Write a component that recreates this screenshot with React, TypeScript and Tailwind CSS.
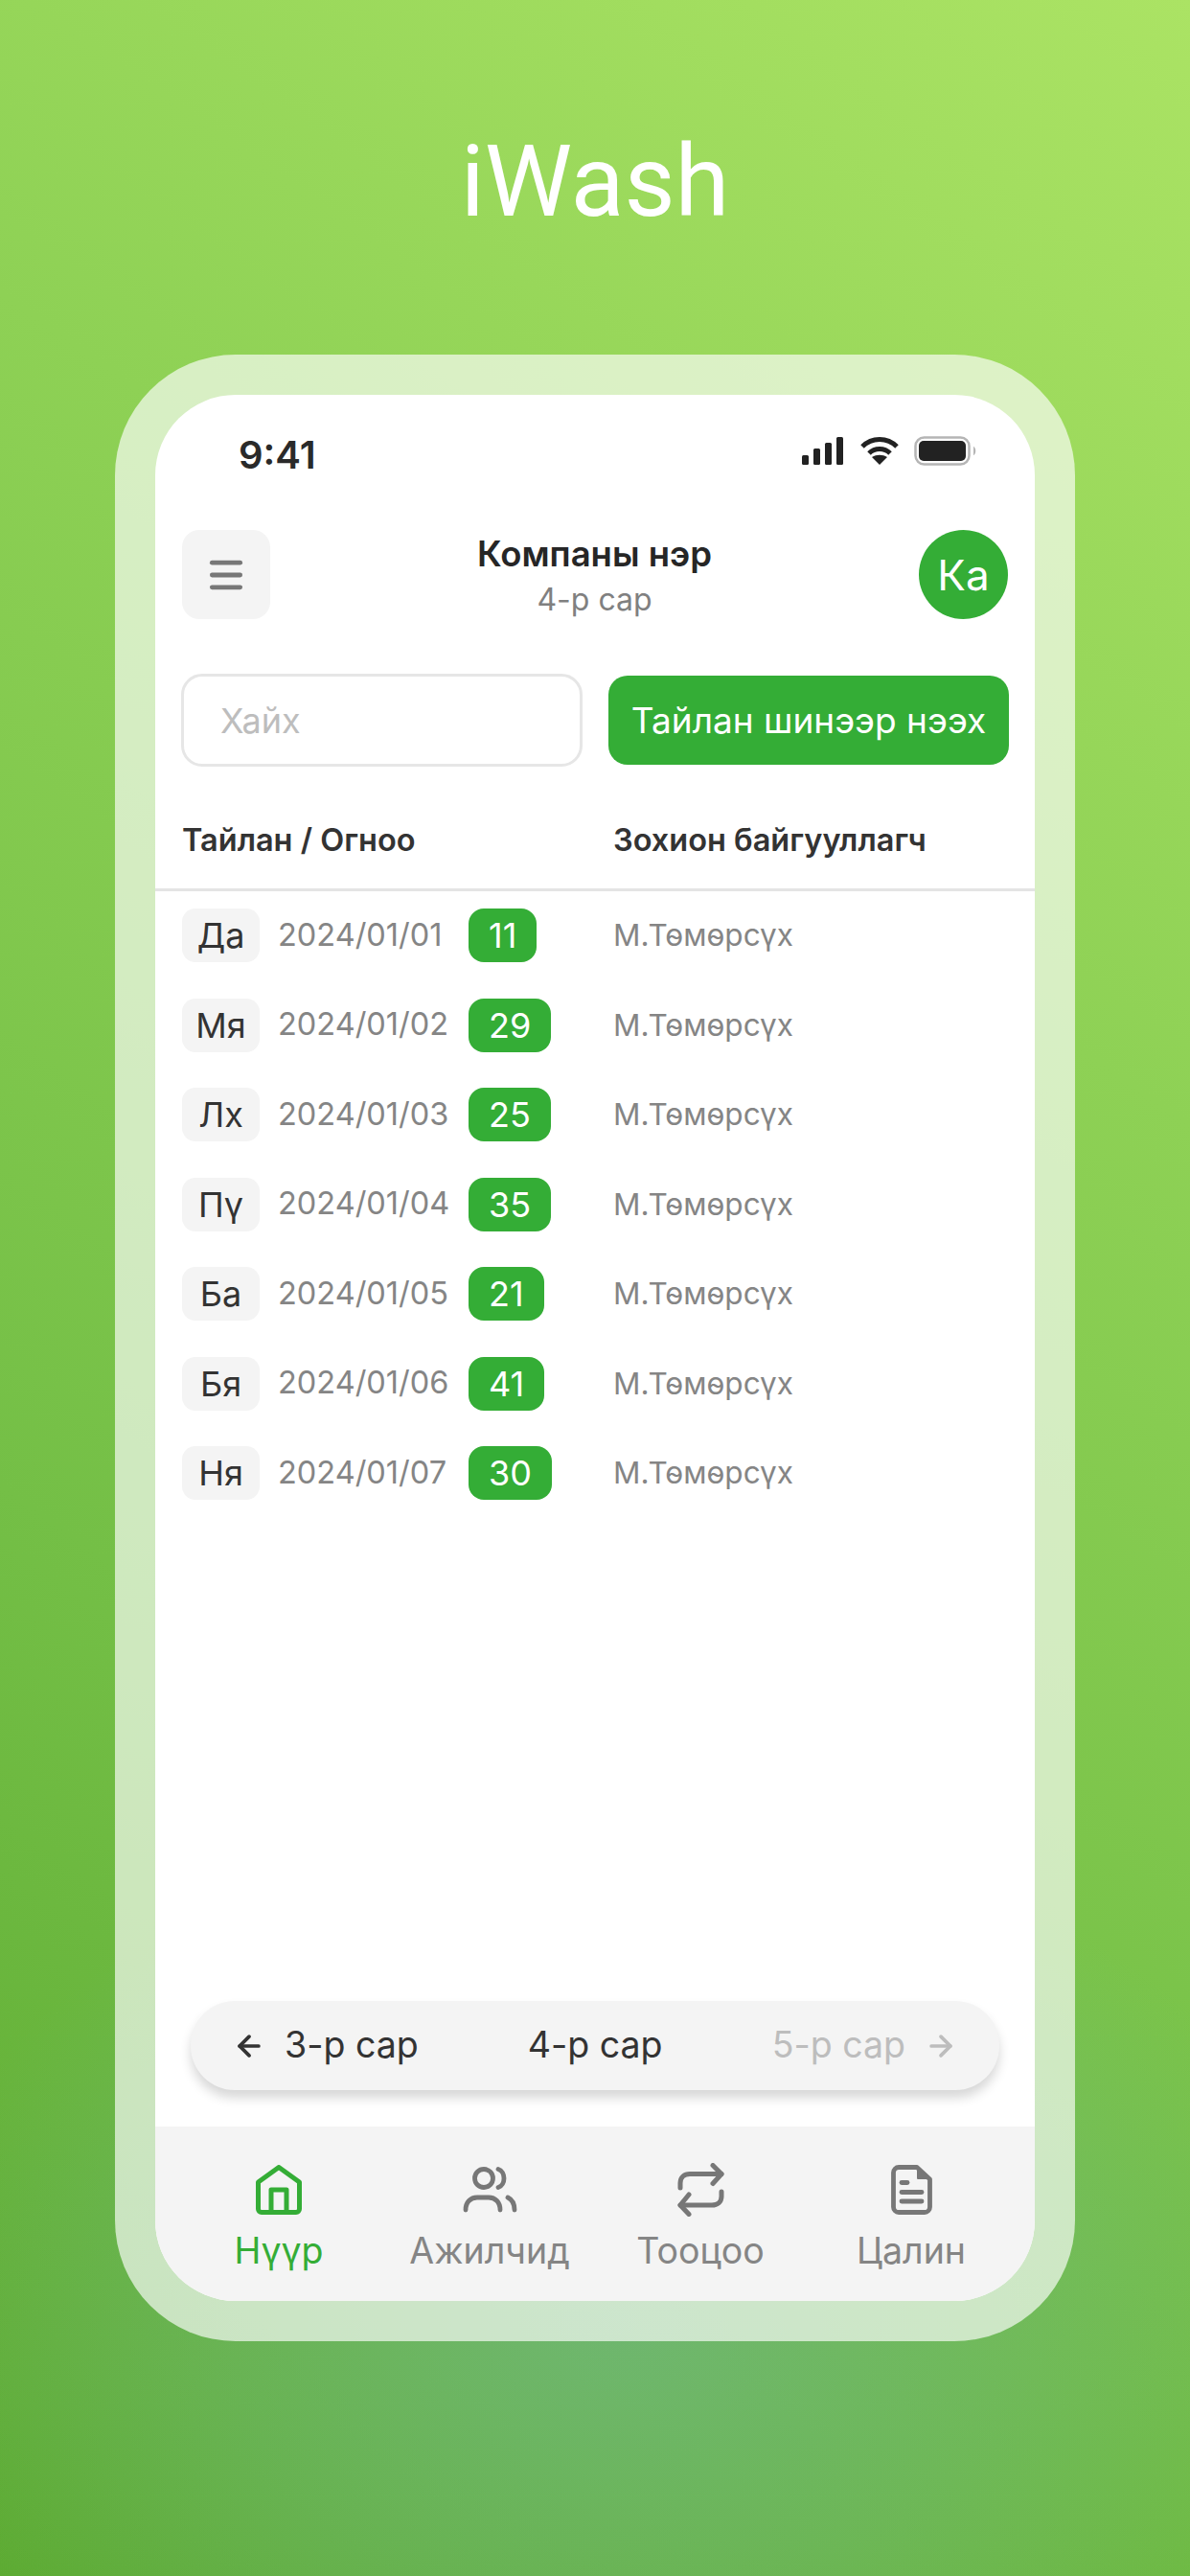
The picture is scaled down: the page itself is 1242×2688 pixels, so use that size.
import { ArrowLeft, ArrowRight, Menu } from "lucide-react";

const rows = [
  { day: "Да", date: "2024/01/01", count: 11 },
  { day: "Мя", date: "2024/01/02", count: 29 },
  { day: "Лх", date: "2024/01/03", count: 25 },
  { day: "Пү", date: "2024/01/04", count: 35 },
  { day: "Ба", date: "2024/01/05", count: 21 },
  { day: "Бя", date: "2024/01/06", count: 41 },
  { day: "Ня", date: "2024/01/07", count: 30 },
];

function HomeIcon() {
  return (
    <svg width="48" height="52" viewBox="0 0 48 52" fill="none" stroke="#34ad36" strokeWidth="5" strokeLinejoin="round">
      <path d="M24 2.5 L45.5 18 V46 a3.5 3.5 0 0 1 -3.5 3.5 H6 a3.5 3.5 0 0 1 -3.5 -3.5 V18 Z" />
      <path d="M16 49.5 V26 H32 V49.5" />
    </svg>
  );
}

function UsersIcon() {
  return (
    <svg width="57" height="48" viewBox="0 0 57 48" fill="none" stroke="#777" strokeWidth="4.8" strokeLinecap="round">
      <circle cx="22" cy="12" r="9.5" />
      <path d="M37 2.5 C45 5 45 19 37 21.5" />
      <path d="M3 45 C3 37 8 32 15 32 H27 C34 32 39 37 39 45" />
      <path d="M47 32 C51 34 54 38 54 45" />
    </svg>
  );
}

function RepeatIcon() {
  return (
    <svg width="49" height="56" viewBox="0 0 49 56" fill="none" stroke="#777" strokeWidth="5" strokeLinecap="round" strokeLinejoin="round">
      <path d="M37 2.5 L46 11.5 L37 21.5" />
      <path d="M46 11.5 H13 C7 11.5 3 15 3 21 V26" />
      <path d="M12 33 L3 44 L12 53.5" />
      <path d="M3 44 H36 C42 44 46 40.5 46 35 V30" />
    </svg>
  );
}

function ReportIcon() {
  return (
    <svg width="43" height="52" viewBox="0 0 43 52" fill="none" stroke="#777" strokeWidth="4.8" strokeLinecap="round" strokeLinejoin="round">
      <path d="M27 2.5 H8 a5.5 5.5 0 0 0 -5.5 5.5 V44 a5.5 5.5 0 0 0 5.5 5.5 H35 a5.5 5.5 0 0 0 5.5 -5.5 V15 Z" />
      <path d="M28 4 V14 H39" fill="#777" strokeWidth="2" />
      <path d="M11 18.5 H17" />
      <path d="M11 28.5 H32" />
      <path d="M11 38 H32" />
    </svg>
  );
}

function StatusIcons() {
  return (
    <div className="flex items-center">
      <svg width="43" height="29" viewBox="0 0 43 29" fill="#222">
        <rect x="0" y="19" width="7" height="10" rx="1.5" />
        <rect x="12" y="12" width="7" height="17" rx="1.5" />
        <rect x="24" y="6" width="7" height="23" rx="1.5" />
        <rect x="36" y="0" width="7" height="29" rx="1.5" />
      </svg>
      <svg className="ml-[18px]" width="40" height="29" viewBox="0 0 40 29" fill="none" stroke="#222" strokeWidth="5">
        <path d="M2 10 C12 0 28 0 38 10" />
        <path d="M9 17 C15 11 25 11 31 17" />
        <path d="M20 29 L12 21 C17 18 23 18 28 21 Z" fill="#222" stroke="none" />
      </svg>
      <svg className="ml-[16px]" width="66" height="31" viewBox="0 0 66 31" fill="none">
        <rect x="1.5" y="1.5" width="56" height="28" rx="9" stroke="#b5b5b5" strokeWidth="2.5" />
        <rect x="5" y="5" width="49" height="21" rx="5" fill="#222" />
        <path d="M62 11 C65 12 65 19 62 20 Z" fill="#b5b5b5" />
      </svg>
    </div>
  );
}

export default function App() {
  return (
    <div className="flex h-[2688px] w-[1242px] flex-col items-center bg-[radial-gradient(ellipse_760px_520px_at_52%_90%,rgba(112,182,132,0.7)_0%,rgba(112,182,132,0.35)_55%,rgba(112,182,132,0)_100%),linear-gradient(215deg,#abe364_0%,#8ed155_33%,#74bf46_68%,#5dab32_100%)] font-['Inter',sans-serif]">
      <h1 className="mt-[130px] h-[120px] font-['Roboto',sans-serif] text-[103px] leading-[120px] font-normal text-white">iWash</h1>

      <div className="mt-[120px] h-[2073px] w-[1002px] rounded-[126px] bg-white/65 p-[42px]">
        <div className="flex h-full flex-col overflow-hidden rounded-[84px] bg-white">
          <div className="flex h-[141px] shrink-0 items-start justify-between pt-[40px] pr-[60px] pl-[87px]">
            <span className="text-[40px] leading-[46px] font-semibold text-[#2a2a2a]">9:41</span>
            <div className="pt-[3px]"><StatusIcons /></div>
          </div>

          <header className="flex h-[93px] shrink-0 items-center justify-between px-[28px]">
            <button className="grid h-[93px] w-[92px] place-items-center rounded-[18px] bg-[#f4f4f4]">
              <Menu size={44} strokeWidth={2.6} className="text-[#777]" />
            </button>
            <div className="flex flex-col items-center">
              <span className="text-[36.5px] leading-[52px] font-semibold text-[#262626]">Компаны нэр</span>
              <span className="text-[32px] leading-[44px] text-[#808080]">4-р сар</span>
            </div>
            <div className="grid h-[93px] w-[93px] place-items-center rounded-full bg-[#34ad36] text-[44px] text-white">Ка</div>
          </header>

          <div className="mt-[57px] flex h-[97px] shrink-0 items-center justify-between px-[27px]">
            <div className="flex h-[97px] w-[419px] items-center rounded-[22px] border-[3px] border-[#e6e6e6] bg-white pl-[38px] text-[36px] text-[#bdbdbd]">Хайх</div>
            <button className="h-[93px] w-[418px] rounded-[20px] bg-[#34ad36] text-[37px] text-white">Тайлан шинээр нээх</button>
          </div>

          <div className="grid h-[130px] shrink-0 grid-cols-[450px_1fr] items-center border-b-[3px] border-[#e4e4e4] pt-[28px] pl-[28px] text-[32.5px] font-semibold text-[#333]">
            <span>Тайлан / Огноо</span>
            <span>Зохион байгууллагч</span>
          </div>

          <div className="flex flex-col pt-[18px]">
            {rows.map((row) => (
              <div key={row.date} className="grid h-[93.5px] grid-cols-[450px_1fr] pl-[28px]">
                <div className="flex h-[56px] items-center">
                  <span className="grid h-[56px] w-[81px] place-items-center rounded-[14px] bg-[#f4f4f4] text-[36px] text-[#333]">{row.day}</span>
                  <span className="ml-[19px] w-[179px] text-[32.5px] text-[#858585]">{row.date}</span>
                  <span className="ml-[20px] rounded-[16px] bg-[#34ad36] px-[21px] text-[36px] leading-[56px] text-white">{row.count}</span>
                </div>
                <span className="text-[31.5px] leading-[56px] text-[#858585]">М.Төмөрсүх</span>
              </div>
            ))}
          </div>

          <div className="flex-1" />

          <div className="mx-[37px] flex h-[93px] shrink-0 items-center justify-between rounded-[46px] bg-[#f4f4f4] px-[44px] text-[37.5px] text-[#333] shadow-[0_8px_12px_rgba(0,0,0,0.16)]">
            <div className="flex items-center gap-[20px]">
              <ArrowLeft size={34} strokeWidth={2.6} />
              <span>3-р сар</span>
            </div>
            <span>4-р сар</span>
            <div className="flex items-center gap-[20px] text-[#bdbdbd]">
              <span>5-р сар</span>
              <ArrowRight size={34} strokeWidth={2.6} />
            </div>
          </div>

          <nav className="mt-[38px] grid h-[182px] shrink-0 grid-cols-4 bg-[#f4f4f4] px-[19px] pt-[36px] text-[37.5px] text-[#858585]">
            <div className="flex flex-col items-center gap-[12px] text-[#34ad36]">
              <div className="grid h-[60px] place-items-center"><HomeIcon /></div>
              <span className="leading-[44px]">Нүүр</span>
            </div>
            <div className="flex flex-col items-center gap-[12px]">
              <div className="grid h-[60px] place-items-center"><UsersIcon /></div>
              <span className="leading-[44px]">Ажилчид</span>
            </div>
            <div className="flex flex-col items-center gap-[12px]">
              <div className="grid h-[60px] place-items-center"><RepeatIcon /></div>
              <span className="leading-[44px]">Тооцоо</span>
            </div>
            <div className="flex flex-col items-center gap-[12px]">
              <div className="grid h-[60px] place-items-center"><ReportIcon /></div>
              <span className="leading-[44px]">Цалин</span>
            </div>
          </nav>
        </div>
      </div>
    </div>
  );
}
